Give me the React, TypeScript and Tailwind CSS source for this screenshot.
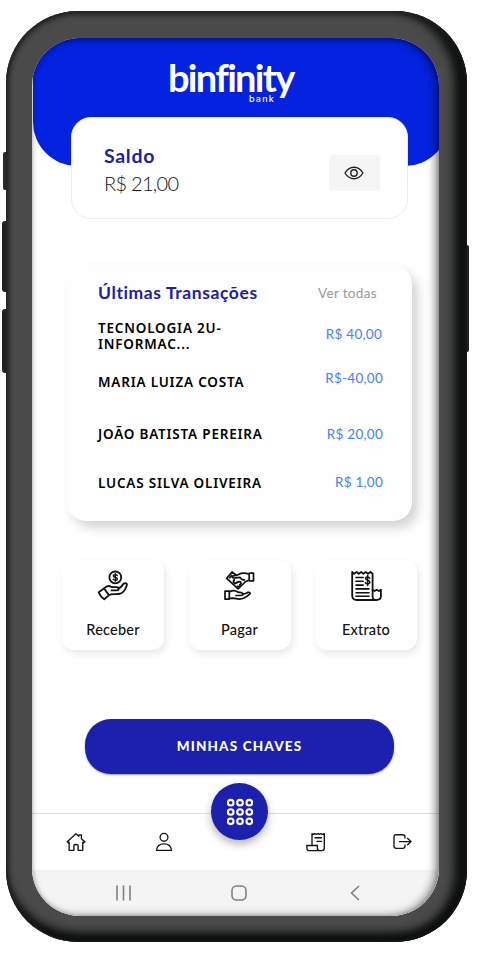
import React from "react";

const ReceiveIcon = () => (
  <svg viewBox="0 0 32 32" className="w-8 h-8" fill="none" stroke="#111" strokeWidth="1.8" strokeLinecap="round" strokeLinejoin="round">
    <circle cx="18.3" cy="7.4" r="5.9" />
    <path d="M20.3 5.6c-.4-.8-1.2-1-2-1-1.1 0-2 .5-2 1.4 0 2 4 .9 4 2.9 0 .9-.9 1.4-2 1.4-.9 0-1.7-.3-2-1M18.3 3.6v7.6" strokeWidth="1.4" />
    <path d="M7 18.5c2-2.3 4.800-3 7-1.900l1.500.6h4.300c2.500 0 2.500 3.200 0 3.200h-5.300" />
    <path d="M21.300 18.200c2.200-.2 3.500-1.800 4.500-3.700 1-1.800 4.600-1.700 4.100.4-1.100 4.300-4 8.600-8.400 9.100-3.600.4-7-.4-9.700 1" />
    <path d="M1.700 22.300l5.300-3.800 5 6.600-4.800 4.200c-2.300-1.600-4.200-3.800-5.500-7z" />
  </svg>
);

const PayIcon = () => (
  <svg viewBox="0 0 32 32" className="w-8 h-8 -ml-[2px]" fill="none" stroke="#111" strokeWidth="1.7" strokeLinecap="round" strokeLinejoin="round">
    <path d="M26.200 3.200h4.300v7.600h-4.300z" />
    <path d="M26.200 4.300c-4-1.500-7.700-1.400-10.700.2-2.500 1.300-5.300.9-6.100 1.800-.8 1.200 1 2 3.200 1.600l4.400-.6c.8 2.200 2.700 2.700 4.400 2.500" />
    <path d="M26.200 10c-1.500.7-2.600 1.200-4 1.700M9 2L3.700 8.300l11.400 10.500 7.100-6.800M9 2l3.700 2.700" />
    <path d="M11.200 9.800c-1.700 1.800-.3 3.900 1.600 3.300 1.500-.5 2.500-2.300 4.300-1.200 1.300.8.900 2.300-.2 3M6.600 7.600l2-2M14.400 16.400l1.600.2" strokeWidth="1.900" />
    <path d="M2 21.100h4.300v8H2zM6.300 22c3.300-1.800 6.200-1.700 8.500.2l3.500.5c2.500.5 2 2.800 0 2.800H13" />
    <path d="M19.500 24c2.300.3 3.900-1 5.500-1.600 1.800-.5 2.800.7 1.600 1.800-3 2.800-6.300 5-10.300 4.900l-6.500-1-3.500.2" />
  </svg>
);

const StatementIcon = () => (
  <svg viewBox="0 0 32 32" className="w-8 h-8" fill="none" stroke="#111" strokeWidth="1.8" strokeLinecap="round" strokeLinejoin="round">
    <path d="M2.200 2l2 1.800L6.600 2l2.200 1.800L11.200 2l2.200 1.800L15.800 2 18 3.800 20.400 2l2.200 1.800v22.400c0 2.300 1.400 3.800 3.400 3.800H6.800c-2.800 0-4.600-1.700-4.600-4.200V2z" />
    <path d="M22.600 19.800l2 1.200 2.100-1.200 2.100 1.200 2.100-1.200v6.500c0 2.400-1.900 3.700-4.900 3.700" />
    <path d="M6 7.500h7.200M6 11.300h7.200M6 15.100h7.200M6 18.900h13M6 22.700h13M6 26.300h13" strokeWidth="1.600" />
    <path d="M19.600 8.200c-.4-1-1-1.300-2-1.300-1.200 0-2 .6-2 1.600 0 2.300 4.200 1.300 4.200 3.800 0 1-.9 1.700-2.200 1.700-1.200 0-2-.5-2.300-1.500M17.600 5.500v10" strokeWidth="1.500" />
  </svg>
);

const NavIcon = ({ children }: { children: React.ReactNode }) => (
  <svg viewBox="0 0 20 20" className="w-5 h-5" fill="none" stroke="#151515" strokeWidth="1.35" strokeLinecap="round" strokeLinejoin="round">
    {children}
  </svg>
);

const transactions = [
  { name: "TECNOLOGIA 2U-\nINFORMAC...", value: "R$ 40,00", row: "h-[49px]", shift: "mr-[1px] pt-[6px]", nameShift: "" },
  { name: "MARIA LUIZA COSTA", value: "R$-40,00", row: "h-[51px]", shift: "pt-[1px]", nameShift: "pt-[5px]" },
  { name: "JOÃO BATISTA PEREIRA", value: "R$ 20,00", row: "h-[49px]", shift: "pt-[6px]", nameShift: "pt-[6px]" },
  { name: "LUCAS SILVA OLIVEIRA", value: "R$ 1,00", row: "h-[38px]", shift: "pt-[5px]", nameShift: "pt-[6px]" },
];

const actions = [
  { label: "Receber", icon: <ReceiveIcon /> },
  { label: "Pagar", icon: <PayIcon /> },
  { label: "Extrato", icon: <StatementIcon /> },
];

const Header = () => {
  return <header className="ml-px h-[128px] w-[416px] shrink-0 rounded-b-[44px] bg-[#0422df] pt-[18px]">
      <div className="ml-[135px] w-[130px] text-white">
        <p className="whitespace-nowrap text-[38px] leading-[42px] font-bold tracking-[-1.7px]">binfinity</p>
        <p className="-mt-[4px] pl-[81px] text-[9px] leading-[10px] font-medium tracking-[1.2px] font-['Inter']">bank</p>
      </div>
    </header>;
};

const Balance = () => {
  return <section className="relative ml-[39px] -mt-[49px] flex h-[102px] w-[337px] shrink-0 justify-between rounded-[20px] border border-[#ececec] bg-white pl-[32px] pr-[27px]">
      <div className="pt-[26px]">
        <h2 className="text-[19.5px] leading-[24px] font-bold text-[#1c20a8] tracking-[0.7px]">Saldo</h2>
        <p className="mt-[3px] text-[20px] leading-[24px] font-light text-[#111] tracking-[-0.7px]">R$ 21,00</p>
      </div>
      <button className="mt-[37px] flex h-9 w-[51px] items-center justify-center rounded-[4px] bg-[#f5f5f5] pr-px">
        <svg viewBox="0 0 20 14" className="w-5 h-[14px]" fill="none" stroke="#222" strokeWidth="1.4">
          <path d="M1 7c2.300-3.700 5.300-5.700 9-5.700S16.700 3.300 19 7c-2.300 3.700-5.300 5.700-9 5.700S3.300 10.700 1 7z" />
          <circle cx="10" cy="7" r="3.2" />
        </svg>
      </button>
    </section>;
};

const Transactions = () => {
  return <section className="ml-[35px] mt-[46px] h-[256px] w-[345px] shrink-0 rounded-[19px] bg-[#fefefe] pl-[31px] pr-[29px] pt-[17px] shadow-[6px_7px_11px_rgba(0,0,0,0.17)]">
      <div className="flex h-[22px] items-center justify-between">
        <h2 className="text-[17.5px] font-bold tracking-[0.6px] text-[#1c20a8]">Últimas Transações</h2>
        <a className="mr-[6px] text-[13.5px] tracking-[0.35px] text-[#9a9a9a]">Ver todas</a>
      </div>
      <ul className="mt-[16px]">
        {transactions.map((t) => (
          <li key={t.name} className={`flex justify-between ${t.row}`}>
            <span className={`whitespace-pre text-[13.5px] leading-4 font-semibold tracking-[0.8px] text-black font-['Noto_Sans'] ${t.nameShift}`}>{t.name}</span>
            <span className={`text-[13.5px] leading-4 tracking-[0.25px] text-[#4381fa] ${t.shift}`}>{t.value}</span>
          </li>
        ))}
      </ul>
    </section>;
};

const BottomNav = () => {
  return <nav className="relative mt-[39px] flex h-[57px] shrink-0 justify-between border-t border-[#dedede] px-[34px] pt-[18px]">
      <NavIcon>
        <path d="M1.200 9.800L10 1.700l2.800 2.600V2.800h2.600v3.900l3.400 3.100-1.200 1-.8-.7v8.200h-4.700v-4.800c0-1.400-4.200-1.400-4.200 0v4.800H3.100v-8.200l-.8.700z" />
      </NavIcon>
      <div className="mr-[32px] ml-[35px]">
        <NavIcon>
          <circle cx="10" cy="5.3" r="3.9" />
          <path d="M2.500 18.300c.4-4.200 3.300-6.500 7.500-6.500s7.100 2.300 7.500 6.500z" />
        </NavIcon>
      </div>
      <button className="absolute left-[179px] -top-[31px] flex h-[57px] w-[57px] items-center justify-center rounded-full bg-[#1b20af] shadow-[0_4px_8px_rgba(0,0,0,0.3)]">
        <svg viewBox="0 0 28 28" className="h-7 w-7" fill="none" stroke="#fff" strokeWidth="2.1">
          {[4.7, 14, 23.3].map((y) => [4.7, 14, 23.3].map((x) => <circle key={`${x}-${y}`} cx={x} cy={y} r="2.8" />))}
        </svg>
      </button>
      <div className="ml-[67px] -mr-[3px]">
        <NavIcon>
          <path d="M6 12.500V1.600l1.400.8 1.500-.8 1.500.8 1.500-.8 1.500.8 1.500-.8 1.500.8 1.900-.8v14.500c0 1.500-.9 2.500-2.300 2.500H3.200C.6 18.600.8 16 .8 13.500h10.600v2.700c0 1.300 1 2.400 2.300 2.400" />
          <path d="M9 5.700h6.500M11 9.300h4.500" />
        </NavIcon>
      </div>
      <div className="-mr-[8px] ml-[37px]">
        <NavIcon>
          <path d="M12 6V5c0-1.500-.8-2.300-2.300-2.300H3.300C1.800 2.700 1 3.500 1 5v9c0 1.500.8 2.300 2.300 2.300h6.400c1.500 0 2.300-.8 2.300-2.300v-1M6.500 9.600h11M14.500 6.300l3.500 3.300-3.500 3.300" />
        </NavIcon>
      </div>
    </nav>;
};

const SystemBar = () => {
  return <div className="flex h-[46px] shrink-0 items-center bg-[#f4f4f4] pl-[84px] text-[#808080]">
      <svg viewBox="0 0 16 16" className="h-4 w-4" stroke="currentColor" strokeWidth="1.6">
        <path d="M1 .5v15M7.500.5v15M14 .5v15" />
      </svg>
      <svg viewBox="0 0 16 16" className="ml-[99px] h-4 w-4" fill="none" stroke="currentColor" strokeWidth="1.6">
        <rect x="1" y="1" width="14" height="14" rx="4.5" />
      </svg>
      <svg viewBox="0 0 10 16" className="ml-[103px] h-4 w-[10px]" fill="none" stroke="currentColor" strokeWidth="1.6">
        <path d="M9 1L1.500 8 9 15" />
      </svg>
    </div>;
};

export default function App() {
  return (
    <div className="relative h-[957px] w-[478px] overflow-hidden bg-white font-['Lato',sans-serif]">
      <span className="absolute left-[3px] top-[152px] h-[38px] w-2 rounded-l-[2px] bg-[#2a2b2f]" />
      <span className="absolute left-[2px] top-[221px] h-[71px] w-2 rounded-l-[3px] bg-[#202124]" />
      <span className="absolute left-[2px] top-[309px] h-[64px] w-2 rounded-l-[3px] bg-[#202124]" />
      <span className="absolute left-[461px] top-[245px] h-[107px] w-2 rounded-r-[2px] bg-[#202124]" />
      <div className="relative ml-[6px] mt-[11px] inline-block h-[931px] w-[461px] rounded-[72px] bg-[#4a4a4a] px-[26px] pt-[27px] shadow-[inset_2px_0_4px_#202221,inset_0_3px_6px_#202221,inset_-16px_0_10px_-3px_#0d0f10,inset_0_-13px_9px_-3px_#0d0f10]">
        <main className="relative flex h-[878px] w-[407px] flex-col overflow-hidden rounded-[48px] bg-white">
          <Header />
          <Balance />
          <Transactions />
          <div className="ml-[30px] mt-[39px] flex shrink-0 gap-[24.5px]">
            {actions.map((a) => (
              <button key={a.label} className="flex h-[90px] w-[102px] flex-col items-center rounded-[12px] bg-white pt-[10px] shadow-[2px_4px_7px_rgba(0,0,0,0.09)]">
                {a.icon}
                <span className="mt-[17px] text-[14.5px] leading-[22px] font-medium text-[#111] tracking-[0.2px]">{a.label}</span>
              </button>
            ))}
          </div>
          <button className="ml-[53px] mt-[69px] h-[55px] w-[309px] shrink-0 rounded-[26px] bg-[#1b20af] text-[13.5px] font-black tracking-[1.15px] text-white shadow-[0_1px_2px_rgba(0,0,0,0.4)]">MINHAS CHAVES</button>
          <BottomNav />
          <SystemBar />
          <div className="pointer-events-none absolute inset-0 rounded-[48px] shadow-[inset_-4px_0_8px_rgba(0,0,0,0.42),inset_0_1px_5px_rgba(0,0,0,0.3)]" />
        </main>
      </div>
    </div>
  );
}
